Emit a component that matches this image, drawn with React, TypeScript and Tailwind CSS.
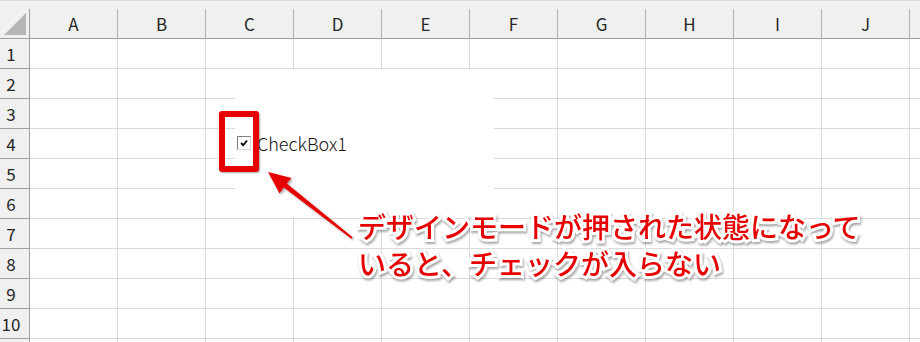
import React from "react";

const COLS = ["A", "B", "C", "D", "E", "F", "G", "H", "I", "J"];
const ROWS = [1, 2, 3, 4, 5, 6, 7, 8, 9, 10, 11];

export default function App() {
  return (
    <div
      className="relative w-[920px] h-[342px] overflow-hidden bg-white"
      style={{ fontFamily: '"Noto Sans CJK JP", "Noto Sans", sans-serif' }}
    >
      {/* top strip */}
      <div className="h-[9px] bg-[#f0f0f0] border-t border-[#d9d9d9]" />
      {/* column header row */}
      <div className="flex h-[30px] bg-[#f0f0f0] border-b border-[#9f9f9f]">
        <div className="relative w-[30px] shrink-0 border-r border-[#9f9f9f]">
          <svg className="absolute left-[4px] top-[4px]" width="22" height="22" viewBox="0 0 22 22">
            <polygon points="22,0 22,22 0,22" fill="#b5b5b5" />
          </svg>
        </div>
        {COLS.map((c) => (
          <div
            key={c}
            className="w-[88px] shrink-0 border-r border-[#b0b0b0] flex items-center justify-center text-[17px] text-[#262626] leading-none"
          >
            {c}
          </div>
        ))}
        <div className="flex-1" />
      </div>
      {/* rows */}
      {ROWS.map((r) => (
        <div key={r} className="flex h-[30px]">
          <div className="w-[30px] shrink-0 bg-[#f0f0f0] border-r border-b border-[#9f9f9f] flex items-center justify-center pr-[7px] text-[17px] text-[#262626] leading-none">
            {r <= 10 ? r : ""}
          </div>
          {COLS.map((c) => (
            <div key={c} className="w-[88px] shrink-0 border-r border-b border-[#dadada]" />
          ))}
          <div className="flex-1 border-b border-[#dadada]" />
        </div>
      ))}

      {/* design-mode control area */}
      <div className="absolute left-[235px] top-[70px] w-[259px] h-[147px] bg-white" />
      <div className="absolute left-[237px] top-[136px] w-[14px] h-[14px] bg-white border border-t-[#808080] border-l-[#808080] border-r-[#d8d8d8] border-b-[#d8d8d8] flex items-center justify-center">
        <svg width="10" height="10" viewBox="0 0 10 10">
          <path d="M2 5 L4.2 7.2 L8 2.5" stroke="#000" strokeWidth="1.8" fill="none" />
        </svg>
      </div>
      <div className="absolute left-[257px] top-[131px] text-[18px] leading-[24px] font-light text-[#111]">
        CheckBox1
      </div>

      {/* red highlight box */}
      <div className="absolute left-[219px] top-[111px] w-[40px] h-[61px] border-[6px] border-[#e60000] rounded-[3px] shadow-[1px_1px_2px_rgba(0,0,0,0.35)]" />

      {/* arrow */}
      <svg className="absolute left-0 top-0" width="920" height="342" viewBox="0 0 920 342">
        <defs>
          <filter id="sh" x="-20%" y="-20%" width="140%" height="140%">
            <feDropShadow dx="1.5" dy="1.5" stdDeviation="1" floodColor="#000" floodOpacity="0.35" />
          </filter>
        </defs>
        <polygon
          filter="url(#sh)"
          fill="#e60000"
          points="268,172 291.5,178 286.8,183.6 352.6,237.2 351.4,238.8 283.8,187.6 279.5,193.5"
        />
      </svg>

      {/* annotation */}
      <div
        className="absolute left-[358px] top-[208px] text-[28px] leading-[37px] font-medium text-[#e60000] whitespace-nowrap [-webkit-text-stroke:6px_white] [paint-order:stroke_fill] [filter:drop-shadow(1px_2px_1px_rgba(0,0,0,0.35))]"
      >
        <div>デザインモードが押された状態になって</div>
        <div>いると、チェックが入らない</div>
      </div>
    </div>
  );
}
